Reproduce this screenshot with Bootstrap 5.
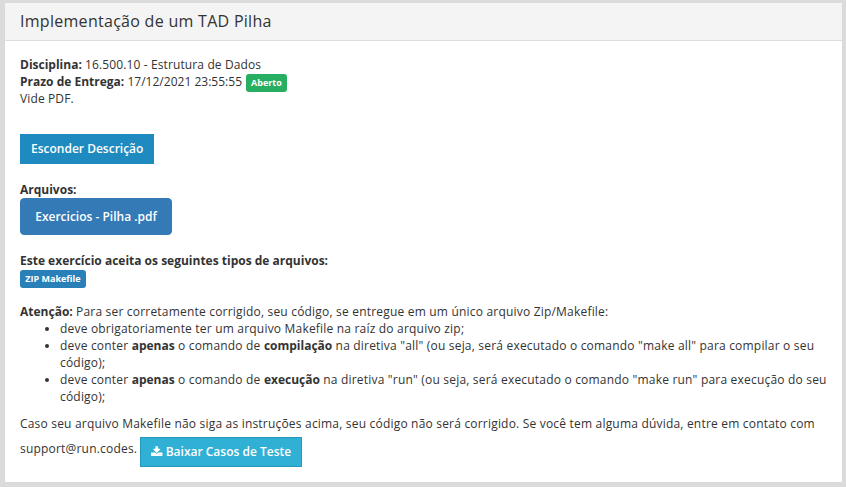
<!DOCTYPE html>
<html lang="pt-BR">
<head>
<meta charset="utf-8">
<meta name="viewport" content="width=device-width, initial-scale=1">
<title>Implementação de um TAD Pilha</title>
<link href="https://cdn.jsdelivr.net/npm/bootstrap@5.3.0/dist/css/bootstrap.min.css" rel="stylesheet">
<style>
body{background:#dbdbdb;color:#333;font:12px/17px "Open Sans",sans-serif;overflow:hidden}
b{font-weight:700;letter-spacing:0}
.panel-box{margin:3px 4px 0 5px;height:479px;border-radius:0;box-shadow:0 1px 1px #cbcbcb;color:#333}
.panel-head{height:38px;padding:0 15px 2px;background:#f4f4f4;border-bottom:1px solid #ddd;border-radius:0!important}
.panel-head h1{font-size:16px;line-height:20px;font-weight:500;letter-spacing:.285px;color:#333}
.panel-body{padding:15px;letter-spacing:.196px}
.details{letter-spacing:.12px}
.tag{font-size:9px;line-height:10px;font-weight:700;letter-spacing:0;padding:4px 5px;border-radius:3px;height:18px}
.tag-open{background:#27ae60;margin-top:1px}
.tag-type{background:#2980b9;width:66px;margin-top:1px}
.btn{--bs-btn-color:#fff;--bs-btn-hover-color:#fff;font-size:12px;font-weight:600;line-height:18px;letter-spacing:0;white-space:nowrap}
.btn-flat{height:30px;padding:5px 10px;border-radius:0}
.btn-hide{background:#1f8abf;border-color:#1f8abf;width:134px}
.btn-file{background:#337ab7;border-color:#337ab7;border-radius:4px;height:37px;width:152px;padding:9px 0}
.btn-cases{background:#31b0d5;border-color:#269abc;width:162px;gap:3px}
.rules{padding-left:40px;margin:0 -5px 10px 0}
.dl-icon{width:12px;height:11px;display:block;margin-top:-1px}
.due{height:17px;letter-spacing:.02px}
.vide{height:17px;margin-bottom:27px}
.files,.types{margin-top:17px}
.notice{margin-top:15px}
.contact{margin-top:5px;gap:3px}
.mail{padding-top:3px}
</style>
<script src="https://cdn.jsdelivr.net/npm/bootstrap@5.3.0/dist/js/bootstrap.bundle.min.js"></script>
</head>
<body>
<main class="card border-0 panel-box">
  <header class="card-header panel-head d-flex align-items-center"><h1 class="m-0">Implementação de um TAD Pilha</h1></header>
  <div class="card-body panel-body">
    <section class="details">
      <div><b>Disciplina:</b> 16.500.10 - Estrutura de Dados</div>
      <div class="d-flex align-items-start due"><span><b>Prazo de Entrega:</b> 17/12/2021 23:55:55</span><span class="badge tag tag-open ms-1">Aberto</span></div>
      <div class="vide">Vide PDF.</div>
    </section>
    <button class="btn btn-flat btn-hide d-block" type="button">Esconder Descrição</button>
    <section class="files">
      <b class="d-block">Arquivos:</b>
      <a class="btn btn-file d-block" href="#">Exercicios - Pilha .pdf</a>
    </section>
    <section class="types">
      <b class="d-block">Este exercício aceita os seguintes tipos de arquivos:</b>
      <span class="badge tag tag-type d-block">ZIP Makefile</span>
    </section>
    <section class="notice">
      <div><b>Atenção:</b> Para ser corretamente corrigido, seu código, se entregue em um único arquivo Zip/Makefile:</div>
      <ul class="rules">
        <li>deve obrigatoriamente ter um arquivo Makefile na raíz do arquivo zip;</li>
        <li>deve conter <b>apenas</b> o comando de <b>compilação</b> na diretiva "all" (ou seja, será executado o comando "make all" para compilar o seu código);</li>
        <li>deve conter <b>apenas</b> o comando de <b>execução</b> na diretiva "run" (ou seja, será executado o comando "make run" para execução do seu código);</li>
      </ul>
      <div class="text-nowrap">Caso seu arquivo Makefile não siga as instruções acima, seu código não será corrigido. Se você tem alguma dúvida, entre em contato com</div>
      <div class="d-flex contact">
        <span class="mail">support@run.codes.</span>
        <a class="btn btn-flat btn-cases d-flex align-items-center justify-content-center" href="#"><svg class="dl-icon" viewBox="0 0 1664 1536" fill="currentColor" aria-hidden="true"><path d="M1280 1216a64 64 0 1 0-128 0 64 64 0 0 0 128 0zm256 0a64 64 0 1 0-128 0 64 64 0 0 0 128 0zm128-224v320q0 40-28 68t-68 28H96q-40 0-68-28t-28-68V992q0-40 28-68t68-28h465l135 136q58 56 136 56t136-56l136-136h464q40 0 68 28t28 68zm-325-569q17 41-14 70L877 941q-18 19-45 19t-45-19L339 493q-31-29-14-70 17-39 59-39h256V0h384v384h256q42 0 59 39z"/></svg><span>Baixar Casos de Teste</span></a>
      </div>
    </section>
  </div>
</main>
</body>
</html>
